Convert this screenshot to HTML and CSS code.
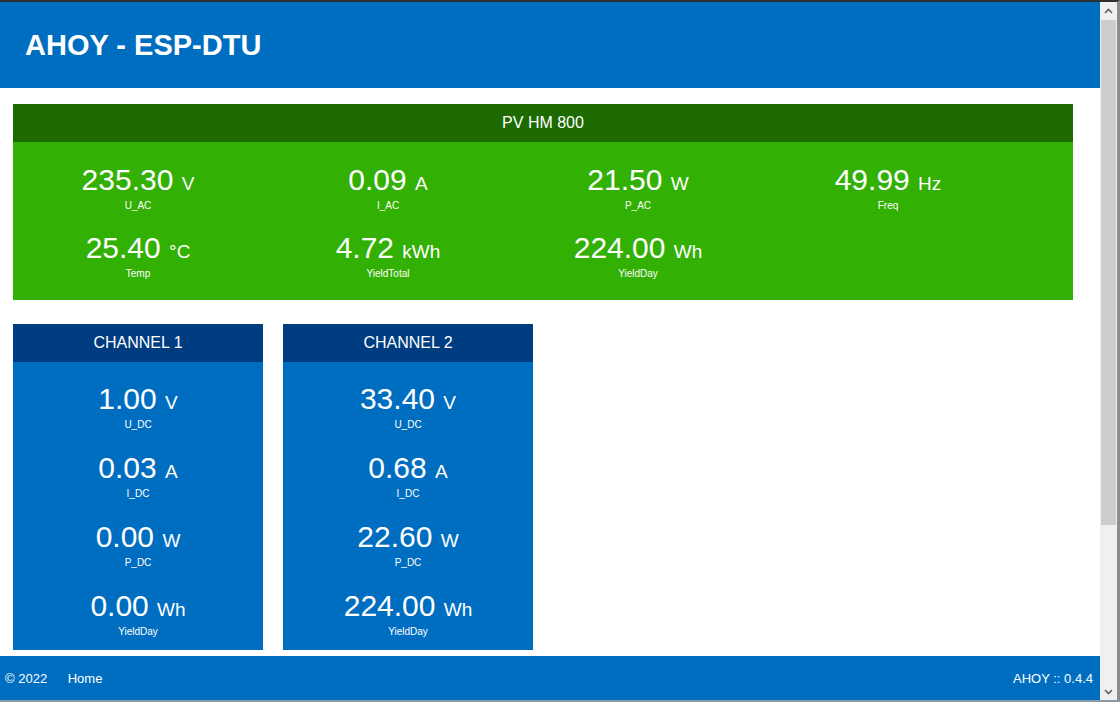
FILE: index.html
```html
<!DOCTYPE html>
<html lang="en">
<head>
    <meta charset="UTF-8">
    <meta name="viewport" content="width=device-width, initial-scale=1.0">
    <title>Index - AHOY</title>
    <link rel="stylesheet" href="styles.css">
</head>
<body>
    <div class="window">
        <div class="viewport">
            <div class="header">
                <h1>AHOY - ESP-DTU</h1>
            </div>
            <div class="main">
                <div class="ch iv">
                    <div class="head">PV HM 800</div>
                    <div class="grid four">
                        <div class="subgrp"><span class="value">235.30 <span class="unit">V</span></span><span class="info">U_AC</span></div>
                        <div class="subgrp"><span class="value">0.09 <span class="unit">A</span></span><span class="info">I_AC</span></div>
                        <div class="subgrp"><span class="value">21.50 <span class="unit">W</span></span><span class="info">P_AC</span></div>
                        <div class="subgrp"><span class="value">49.99 <span class="unit">Hz</span></span><span class="info">Freq</span></div>
                        <div class="subgrp"><span class="value">25.40 <span class="unit">&deg;C</span></span><span class="info">Temp</span></div>
                        <div class="subgrp"><span class="value">4.72 <span class="unit">kWh</span></span><span class="info">YieldTotal</span></div>
                        <div class="subgrp"><span class="value">224.00 <span class="unit">Wh</span></span><span class="info">YieldDay</span></div>
                    </div>
                </div>

                <div class="channels">
                    <div class="ch">
                        <div class="head">CHANNEL 1</div>
                        <div class="grid one">
                            <div class="subgrp"><span class="value">1.00 <span class="unit">V</span></span><span class="info">U_DC</span></div>
                            <div class="subgrp"><span class="value">0.03 <span class="unit">A</span></span><span class="info">I_DC</span></div>
                            <div class="subgrp"><span class="value">0.00 <span class="unit">W</span></span><span class="info">P_DC</span></div>
                            <div class="subgrp"><span class="value">0.00 <span class="unit">Wh</span></span><span class="info">YieldDay</span></div>
                        </div>
                    </div>
                    <div class="ch">
                        <div class="head">CHANNEL 2</div>
                        <div class="grid one">
                            <div class="subgrp"><span class="value">33.40 <span class="unit">V</span></span><span class="info">U_DC</span></div>
                            <div class="subgrp"><span class="value">0.68 <span class="unit">A</span></span><span class="info">I_DC</span></div>
                            <div class="subgrp"><span class="value">22.60 <span class="unit">W</span></span><span class="info">P_DC</span></div>
                            <div class="subgrp"><span class="value">224.00 <span class="unit">Wh</span></span><span class="info">YieldDay</span></div>
                        </div>
                    </div>
                </div>
            </div>
            <div class="footer">
                <p class="left">&copy; 2022 <a href="#">Home</a></p>
                <p class="right">AHOY :: 0.4.4</p>
            </div>
        </div>

        <!-- fake window scrollbar -->
        <div class="scrollbar">
            <div class="arrow">
                <svg width="9" height="6" viewBox="0 0 9 6"><path d="M1 5 L4.5 1.5 L8 5" fill="none" stroke="#606060" stroke-width="1.6"/></svg>
            </div>
            <div class="thumb"></div>
            <div class="track"></div>
            <div class="arrow">
                <svg width="9" height="6" viewBox="0 0 9 6"><path d="M1 1 L4.5 4.5 L8 1" fill="none" stroke="#606060" stroke-width="1.6"/></svg>
            </div>
        </div>
    </div>
</body>
</html>
```

FILE: styles.css
```css
html, body {
    margin: 0;
    padding: 0;
    background-color: #fff;
    font-family: "Liberation Sans", Arial, sans-serif;
}
.window {
    display: flex;
    height: 698px;
    border-top: 2px solid #2f2f2f;
    border-right: 3px solid #8c8c8c;
    border-bottom: 2px solid #8c9aa8;
}
.viewport {
    flex: 1;
    display: flex;
    flex-direction: column;
    min-width: 0;
}
.header {
    height: 86px;
    background-color: #006ec0;
    display: flex;
    align-items: center;
    padding-left: 25px;
}
.header h1 {
    margin: 0;
    color: #fff;
    font-size: 29px;
    font-weight: bold;
}
.main {
    flex: 1;
    padding: 16px 0 0 13px;
}
.ch {
    width: 250px;
    background-color: #006ec0;
    color: #fff;
}
.ch.iv {
    width: 1060px;
    background-color: #32b004;
    margin-bottom: 24px;
}
.ch .head {
    height: 38px;
    line-height: 38px;
    text-align: center;
    font-size: 16px;
    background-color: #003c80;
}
.ch.iv .head {
    background-color: #1d6a00;
}
.grid {
    display: grid;
}
.grid.four {
    grid-template-columns: repeat(4, 250px);
    row-gap: 18px;
    padding: 20px 0;
}
.grid.one {
    grid-template-columns: 250px;
    row-gap: 19px;
    padding: 19px 0 12px 0;
}
.channels {
    display: flex;
    gap: 20px;
}
.subgrp {
    display: flex;
    flex-direction: column;
    align-items: center;
    height: 50px;
}
.value {
    font-size: 30px;
    line-height: 36px;
    white-space: nowrap;
}
.unit {
    font-size: 19px;
}
.info {
    font-size: 10px;
    line-height: 14px;
    margin-top: -3px;
}
.footer {
    height: 44px;
    background-color: #006ec0;
    color: #fff;
    display: flex;
    align-items: center;
    justify-content: space-between;
    padding: 0 7px 0 5px;
    font-size: 13px;
}
.footer p {
    margin: 0;
}
.footer a {
    color: #fff;
    text-decoration: none;
    margin-left: 17px;
}
.scrollbar {
    width: 17px;
    background-color: #f0f0f0;
    display: flex;
    flex-direction: column;
}
.arrow {
    height: 17px;
    display: flex;
    align-items: center;
    justify-content: center;
}
.thumb {
    height: 505px;
    margin: 1px 1px 0 1px;
    background-color: #cdcdcd;
}
.track {
    flex: 1;
}
```
